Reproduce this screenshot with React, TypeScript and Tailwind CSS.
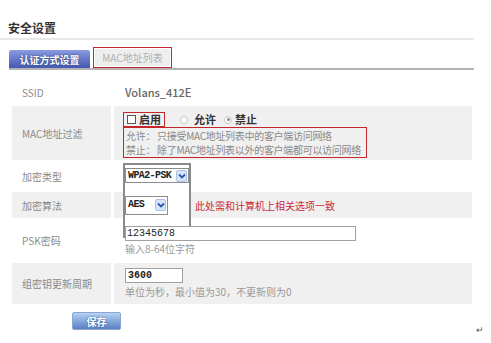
import React from 'react';

function Chevron() {
    return (
        <svg width="8" height="6" viewBox="0 0 8 6" className="block">
            <path d="M1 1.5 L4 4.5 L7 1.5" fill="none" stroke="#2f55a8" strokeWidth="1.8" />
        </svg>
    );
}

function Select({ value, width, height }: { value: string; width: string; height: string }) {
    return (
        <div className={`relative z-10 flex items-center justify-between border border-[#8c8c8c] bg-white pl-[2px] pr-[1px] ${width} ${height}`}>
            <span className="font-['Liberation_Mono',monospace] text-[10px] font-bold leading-none tracking-[-0.6px] text-[#222]">
                {value}
            </span>
            <span className="flex h-[12px] w-[11px] shrink-0 items-center justify-center rounded-[2px] border border-[#a9c0e8] bg-[#d6e3fa]">
                <Chevron />
            </span>
        </div>
    );
}

function Row({ label, gray, height, children, className = '' }: { label: string; gray?: boolean; height: string; children: React.ReactNode; className?: string }) {
    return (
        <div className={`flex gap-[3px] ${height}`}>
            <div className={`flex w-[99px] items-center pl-[10px] text-[10px] text-[#8a8a8a] ${gray ? 'bg-[#f0f0f0]' : ''}`}>
                {label}
            </div>
            <div className={`flex-1 pl-[11px] ${gray ? 'bg-[#f0f0f0]' : ''} ${className}`}>{children}</div>
        </div>
    );
}

export default function App() {
    return (
        <div className="relative h-[343px] w-[491px] overflow-hidden bg-white font-['Noto_Sans_CJK_SC','Noto_Sans',sans-serif]">
            {/* Title */}
            <div className="pl-[8px] pt-[20px] text-[12px] font-bold leading-[15px] text-[#333]">安全设置</div>
            <div className="mt-[3px] h-[2px] w-[474px] bg-[#e8e8e8]" />

            {/* Tabs */}
            <div className="ml-[9px] mt-[7px] flex w-[465px] items-end border-b-2 border-[#b4b4b4]">
                <div className="flex h-[18px] w-[81px] items-center justify-center rounded-t-[2px] bg-gradient-to-b from-[#8a9be0] to-[#4658b0] text-[10px] font-bold text-white [text-shadow:0_0_2px_#23306e]">
                    认证方式设置
                </div>
                <div className="ml-[3px] h-[21px] w-[79px] border border-[#c3262c] p-[1px]">
                    <div className="flex h-full items-center justify-center bg-[#eeeeee] text-[10px] text-[#b0b0b0]">MAC地址列表</div>
                </div>
            </div>

            {/* Form table */}
            <div className="ml-[12px] mt-[11px] flex w-[460px] flex-col gap-[3px]">
                <Row label="SSID" height="h-[22px]" className="flex items-center">
                    <span className="text-[11px] font-medium text-[#666]">Volans_412E</span>
                </Row>

                <Row label="MAC地址过滤" gray height="h-[54px]" className="pt-[6px] !pl-[9px]">
                    <div className="flex h-[15px] items-center">
                        <div className="flex h-[15px] w-[42px] items-center border border-[#c3262c] pl-[3px]">
                            <span className="h-[9px] w-[9px] border border-[#555] bg-white" />
                            <span className="ml-[3px] text-[11px] font-bold leading-none text-[#333]">启用</span>
                        </div>
                        <span className="ml-[15px] h-[8px] w-[8px] rounded-full border border-[#c8c8c8] bg-white" />
                        <span className="ml-[6px] text-[11px] font-bold leading-none text-[#333]">允许</span>
                        <span className="ml-[8px] flex h-[8px] w-[8px] items-center justify-center rounded-full border border-[#c8c8c8] bg-white">
                            <span className="h-[3px] w-[3px] rounded-full bg-[#888]" />
                        </span>
                        <span className="ml-[3px] text-[11px] font-bold leading-none text-[#333]">禁止</span>
                    </div>
                    <div className="w-[244px] whitespace-nowrap border border-[#c3262c] pl-[2px] pt-[1px] text-[10px] leading-[14px] tracking-[-0.3px] text-[#8a8a8a]">
                        <div>允许： 只接受MAC地址列表中的客户端访问网络</div>
                        <div>禁止： 除了MAC地址列表以外的客户端都可以访问网络</div>
                    </div>
                </Row>

                <Row label="加密类型" height="h-[26px]" className="pt-[5px]">
                    <Select value="WPA2-PSK" width="w-[64px]" height="h-[15px]" />
                </Row>

                <Row label="加密算法" gray height="h-[26px]" className="flex items-center">
                    <Select value="AES" width="w-[43px]" height="h-[19px]" />
                    <span className="ml-[27px] text-[10px] text-[#cc2a38]">此处需和计算机上相关选项一致</span>
                </Row>

                <Row label="PSK密码" height="h-[39px]" className="pt-[5px]">
                    <div className="relative z-10 flex h-[15px] w-[231px] items-center border border-[#a0a0a0] bg-white pl-[1px]">
                        <span className="font-['Liberation_Mono',monospace] text-[10px] leading-none text-[#222]">12345678</span>
                    </div>
                    <div className="mt-[1px] text-[10px] leading-[13px] text-[#999]">输入8-64位字符</div>
                </Row>

                <Row label="组密钥更新周期" gray height="h-[41px]" className="pt-[5px]">
                    <div className="flex h-[15px] w-[58px] items-center border border-[#a0a0a0] bg-white pl-[2px]">
                        <span className="font-['Liberation_Mono',monospace] text-[10px] font-bold leading-none text-[#222]">3600</span>
                    </div>
                    <div className="mt-[2px] text-[10px] leading-[13px] text-[#999]">单位为秒，最小值为30，不更新则为0</div>
                </Row>
            </div>

            {/* Save */}
            <div className="ml-[72px] mt-[8px] flex h-[18px] w-[49px] items-center justify-center rounded-[2px] border border-[#8aa6d0] bg-gradient-to-b from-[#b6d2f2] to-[#5a80c4] text-[10px] font-bold text-white [text-shadow:0_0_2px_#2b4a88]">
                保存
            </div>

            {/* Annotation box around the encryption controls */}
            <div className="absolute left-[123px] top-[163px] h-[75px] w-[68px] border-2 border-[#8a8a8a] bg-white" />

            {/* Paragraph mark */}
            <span className="absolute left-[476px] top-[323px] text-[9px] text-[#555]">↵</span>
        </div>
    );
}
